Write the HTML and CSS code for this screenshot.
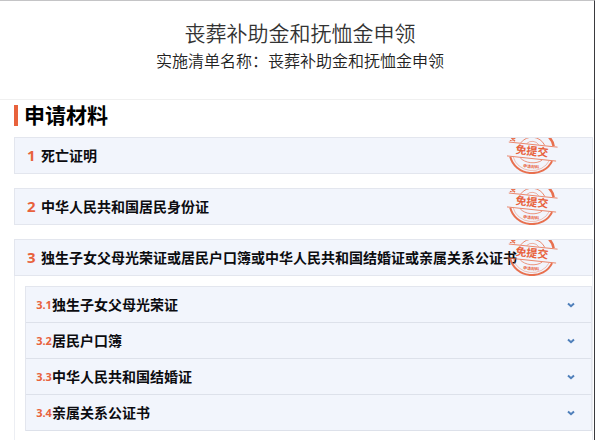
FILE: index.html
```html
<!DOCTYPE html>
<html lang="zh-CN">
<head>
    <meta charset="UTF-8">
    <meta name="viewport" content="width=device-width, initial-scale=1.0">
    <title>丧葬补助金和抚恤金申领</title>
    <link rel="stylesheet" href="styles.css">
</head>
<body>
    <!-- shared icons -->
    <svg class="sprite" aria-hidden="true">
        <symbol id="stamp" viewBox="0 0 52 36">
            <g fill="none" stroke="#e8704f" transform="rotate(6 25 13)">
                <path d="M4 21A22 20 0 0 0 46 21" stroke-width="2"/>
                <path d="M7 21A19 17 0 0 0 43 21" stroke-width=".4"/>
                <path d="M14 21A13 8 0 0 0 36 21" stroke-width=".7"/>
                <path d="M40 -3Q45 1 46 6" stroke-width="2.500"/>
                <path d="M13 6A14 14 0 0 1 37 6" stroke-width=".8"/>
                <path d="M19 6A8 8 0 0 1 31 6" stroke-width=".5"/>
                <path d="M1 6.500H50M0 20.500H50" stroke-width=".8"/>
                <path d="M2 5L7 2M3 2L7 5" stroke-width="1.500"/>
            </g>
            <text class="stamp-text" x="25" y="17" transform="rotate(6 25 13)">免提交</text>
            <text class="stamp-small" x="24" y="30" transform="rotate(5 24 29)">申请材料</text>
        </symbol>
        <symbol id="chevron" viewBox="0 0 8 6">
            <path d="M1 1.500L4 4.200L7 1.500" fill="none" stroke="#4f7fba" stroke-width="2"/>
        </symbol>
    </svg>

    <header class="page-header">
        <h1>丧葬补助金和抚恤金申领</h1>
        <p>实施清单名称：丧葬补助金和抚恤金申领</p>
    </header>

    <main class="materials">
        <h2>申请材料</h2>

        <section class="item">
            <h3 class="item-title"><span class="num">1</span>死亡证明</h3>
            <svg class="stamp" role="img" aria-label="免提交"><use href="#stamp"/></svg>
        </section>

        <section class="item">
            <h3 class="item-title"><span class="num">2</span>中华人民共和国居民身份证</h3>
            <svg class="stamp" role="img" aria-label="免提交"><use href="#stamp"/></svg>
        </section>

        <section class="item item-open">
            <h3 class="item-title"><span class="num">3</span>独生子女父母光荣证或居民户口簿或中华人民共和国结婚证或亲属关系公证书</h3>
            <svg class="stamp" role="img" aria-label="免提交"><use href="#stamp"/></svg>
            <div class="sub-list">
                <button class="sub-item" type="button">
                    <span class="sub-num">3.1</span><span>独生子女父母光荣证</span>
                    <svg class="chevron" aria-hidden="true"><use href="#chevron"/></svg>
                </button>
                <button class="sub-item" type="button">
                    <span class="sub-num">3.2</span><span>居民户口簿</span>
                    <svg class="chevron" aria-hidden="true"><use href="#chevron"/></svg>
                </button>
                <button class="sub-item" type="button">
                    <span class="sub-num">3.3</span><span>中华人民共和国结婚证</span>
                    <svg class="chevron" aria-hidden="true"><use href="#chevron"/></svg>
                </button>
                <button class="sub-item" type="button">
                    <span class="sub-num">3.4</span><span>亲属关系公证书</span>
                    <svg class="chevron" aria-hidden="true"><use href="#chevron"/></svg>
                </button>
            </div>
        </section>
    </main>
</body>
</html>
```

FILE: styles.css
```css
* {
    box-sizing: border-box;
}
body {
    margin: 0;
    min-height: 100vh;
    font-family: "Open Sans", "Noto Sans CJK SC", sans-serif;
    color: #0c0c10;
    background-color: #fff;
    border-top: 1px solid #c4c4c6;
    border-right: 1px solid #3a3a3e;
}
.sprite {
    display: none;
}
.page-header {
    padding: 18px 0 24px 6px;
    text-align: center;
    border-bottom: 1px solid #f0f0f0;
}
.page-header h1 {
    margin: 0;
    font-size: 21px;
    font-weight: 350;
    line-height: 28px;
    color: #333;
}
.page-header p {
    margin: 0;
    font-size: 16px;
    font-weight: 350;
    line-height: 28px;
    color: #222;
}
.materials {
    padding: 3px 1px 0 14px;
}
h2 {
    display: flex;
    align-items: center;
    gap: 6px;
    margin: 0 0 10px;
    font-size: 21px;
    line-height: 24px;
    color: #000;
}
h2::before {
    content: "";
    width: 4px;
    height: 21px;
    background-color: #e8623c;
}
.item {
    position: relative;
    margin-bottom: 14px;
}
.item-title {
    display: flex;
    align-items: center;
    margin: 0;
    padding: 0 12px;
    font-size: 14px;
    line-height: 35px;
    white-space: nowrap;
    background-color: #f2f5fc;
    border: 1px solid #e3e6ee;
}
.num {
    width: 14px;
    font-size: 15px;
    color: #e8623c;
}
.stamp {
    position: absolute;
    top: 1px;
    right: 34px;
    width: 52px;
    height: 36px;
}
.stamp-text {
    font-size: 11px;
    font-weight: bold;
    text-anchor: middle;
    fill: #e8623c;
}
.stamp-small {
    font-size: 4px;
    font-weight: bold;
    text-anchor: middle;
    fill: #e8623c;
}
.item-open {
    margin-bottom: 0;
    padding-bottom: 12px;
    box-shadow: inset 1px 0 #eceef3, inset -1px 0 #eceef3;
}
.sub-list {
    margin: 10px 1px 0 11px;
    border: 1px solid #e3e6ee;
    border-bottom: none;
}
.sub-item {
    display: flex;
    align-items: center;
    width: 100%;
    padding: 0 16px 0 10px;
    font-family: inherit;
    font-size: 14px;
    font-weight: bold;
    line-height: 35px;
    color: inherit;
    background-color: #f2f5fc;
    border: none;
    border-bottom: 1px solid #dde1ea;
    cursor: pointer;
}
.sub-num {
    width: 16px;
    font-size: 11px;
    color: #e8623c;
}
.chevron {
    width: 8px;
    height: 6px;
    margin-left: auto;
}
```
